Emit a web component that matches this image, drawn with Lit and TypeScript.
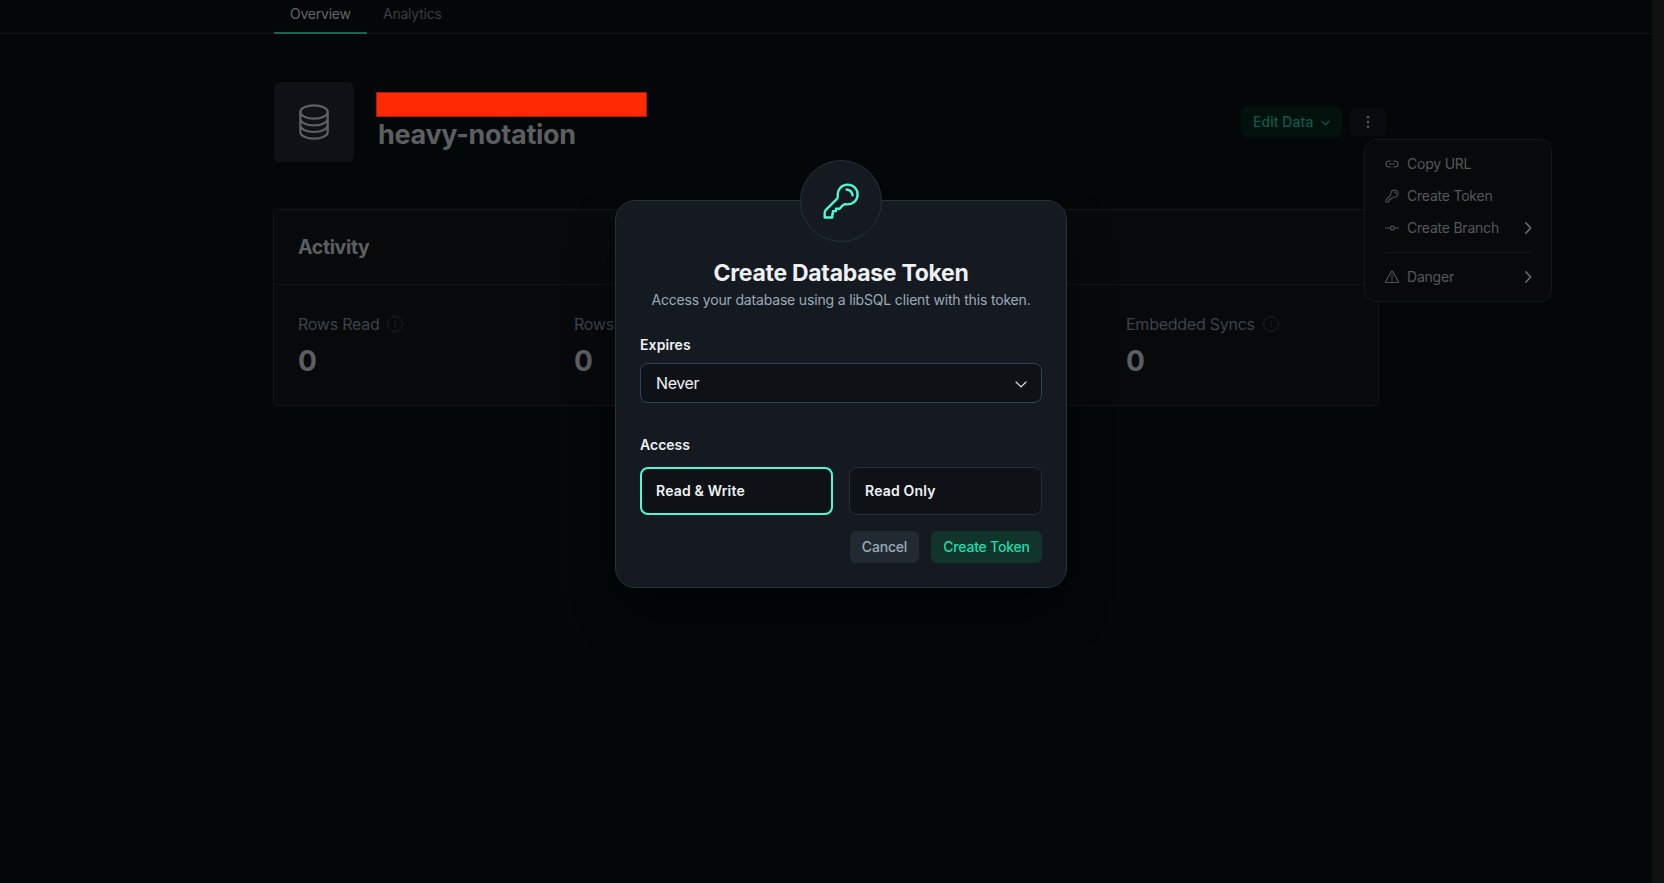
import { LitElement, html, css, svg } from "lit";
import { customElement } from "lit/decorators.js";

const chevronDown = (cls: string) => svg`<svg class=${cls} viewBox="0 0 12 7"><path d="M1 1l5 4.8L11 1"/></svg>`;
const chevronRight = svg`<svg class="chev-right" viewBox="0 0 7 12"><path d="M1 1l4.6 5L1 11"/></svg>`;
const keyIcon = (cls: string) => svg`<svg class=${cls} viewBox="0 0 38 38">
  <path d="M15.8 14.3C15.1 7.6 19.6 2.6 25.6 2.6C31.4 2.6 35.6 7 35.6 12.4C35.6 18.3 31 22.9 23.7 22.3C22 22.2 21.100 22.900 20.300 23.800L17.700 26.700H14V29.100H10.900V32.100H10.300V35.500H2.700V30.600C2.700 29.400 3.100 28.700 3.900 27.900L14.700 17.200C15.600 16.300 15.900 15.500 15.800 14.300Z"/>
  <path d="M24.600 7.500C27.900 7.800 30.200 10.100 30.600 13.400"/></svg>`;
const linkIcon = svg`<svg class="mi" viewBox="0 0 14 14"><path d="M5.4 4H4a3 3 0 0 0 0 6h1.4M8.6 4H10a3 3 0 0 1 0 6H8.6M4.5 7h5"/></svg>`;
const branchIcon = svg`<svg class="mi" viewBox="0 0 14 14"><path d="M0 7h5M9.6 7H14"/><circle cx="7.3" cy="7" r="2"/></svg>`;
const dangerIcon = svg`<svg class="mi" viewBox="0 0 14 14"><path d="M6.4 1.5L.7 11.3a.8.8 0 0 0 .7 1.2h11.2a.8.8 0 0 0 .7-1.2L7.6 1.5a.7.7 0 0 0-1.2 0zM7 4.8v3.6M7 9.8v1"/></svg>`;
const infoIcon = svg`<svg class="info" viewBox="0 0 16 16"><circle cx="8" cy="8" r="7.4"/><path d="M7 7.2h1.3v4M8 4.5v1"/></svg>`;

const metrics = ["Rows Read", "Rows Written", "Storage", "Embedded Syncs"];

@customElement("app-root")
export class AppRoot extends LitElement {
  static styles = css`
    :host { display: block; position: relative; height: 883px; overflow: hidden; background: #030708;
      font-family: Inter, "Liberation Sans", sans-serif; color: #5c5f62; font-size: 14px; }
    * { box-sizing: border-box; }
    svg { fill: none; stroke: currentColor; stroke-linecap: round; stroke-linejoin: round; display: block; flex: none; }
    .shell { display: flex; height: 100%; }
    .page { flex: 1; }
    .scrollbar { width: 12px; background: #111111; }
    .tabs { height: 34px; border-bottom: 1px solid #121617; padding-left: 274px; display: flex; align-items: stretch; }
    .tab { height: 34px; padding: 4px 16px 0; line-height: 20px; color: #393e44; letter-spacing: -.23px; }
    .tab.active { color: #626668; border-bottom: 2px solid #1a644f; width: 93px; }
    .hero { margin: 48px 266px 0 274px; height: 80px; display: flex; align-items: center; }
    .dbbox { width: 80px; height: 80px; border-radius: 6px; background: #0e1217; display: grid; place-items: center; color: #5c6062; }
    .db { width: 32px; height: 38px; stroke-width: 2.2; }
    .names { margin-left: 22px; align-self: flex-start; padding-top: 10px; }
    .redact { width: 271px; height: 25px; background: #ff2a03; border: 1px solid #a31c05; }
    .names h1 { margin: 1px 0 0 2px; font-size: 27px; line-height: 34px; font-weight: 700; letter-spacing: -.3px; }
    .spacer { flex: 1; }
    .edit { height: 32px; width: 101px; border-radius: 6px; background: #03110d; color: #0d5a48; display: flex; align-items: center; justify-content: space-between; padding: 0 12px 2px; font-weight: 500; letter-spacing: .05px; }
    .edit-chev { width: 9px; height: 6px; margin-top: 4px; stroke-width: 1.6; }
    .more { width: 36px; height: 28px; border-radius: 6px; background: #080c0f; margin-left: 8px; display: grid; place-items: center; }
    .dots { width: 4px; height: 14px; fill: currentColor; stroke: none; }
    .card { margin: 47px 0 0 273px; width: 1106px; height: 197px; border: 1px solid #11171a; border-radius: 6px; background: #08090b; }
    .card h2 { margin: 0; height: 75px; border-bottom: 1px solid #101416; padding: 0 24px; line-height: 75px; font-size: 19.5px; font-weight: 700; letter-spacing: -.35px; }
    .metrics { display: grid; grid-template-columns: repeat(4, 276px); padding: 27px 0 0 24px; }
    .label { display: flex; align-items: center; gap: 8px; font-size: 16px; line-height: 24px; color: #3c434a; letter-spacing: -.25px; }
    .info { width: 16px; height: 16px; stroke-width: 1; color: #17212a; }
    .value { font-size: 28px; line-height: 36px; font-weight: 700; margin-top: 7px; }
    .menu { position: absolute; left: 1364px; top: 139px; width: 188px; height: 163px; border: 1px solid #11171a; border-radius: 12px; background: #08090b; padding: 8px 19px 0 20px; }
    .item { height: 32px; padding-bottom: 1px; display: flex; align-items: center; gap: 8px; color: #55585b; letter-spacing: -.22px; }
    .mi { width: 14px; height: 14px; stroke-width: 1.1; color: #525558; }
    .mk { width: 14px; height: 14px; stroke-width: 2.8; color: #525558; }
    .chev-right { width: 7px; height: 12px; margin-left: auto; stroke-width: 1.8; color: #66696b; }
    .rule { height: 1px; background: #12151c; margin: 8px 0; }
    .modal { position: absolute; left: 615px; top: 200px; width: 452px; height: 388px; border: 1px solid #23323b; border-radius: 20px; background: #151a21;
      box-shadow: 0 25px 50px -12px rgba(0,0,0,.7); padding: 0 24px; color: #eef1f4; }
    .badge { position: absolute; left: 184px; top: -41px; width: 82px; height: 82px; border: 1px solid #23323b; border-radius: 50%; background: #151a21; display: grid; place-items: center; color: #4ff8d2; }
    .key { width: 38px; height: 38px; stroke-width: 2.4; }
    .title { margin: 56px 0 0; text-align: center; font-size: 23px; line-height: 33px; font-weight: 700; letter-spacing: -.28px; }
    .sub { margin: 0 -10px; text-align: center; line-height: 20px; color: #9aabb9; letter-spacing: -.17px; }
    .field { display: block; font-weight: 600; line-height: 20px; letter-spacing: .1px; }
    .expires { margin-top: 25px; }
    .select { margin-top: 8px; height: 40px; border: 1px solid #2f4655; border-radius: 8px; background: #0e1116; display: flex; align-items: center; justify-content: space-between; padding: 0 14px 0 15px; font-size: 16px; letter-spacing: -.4px; }
    .sel-chev { width: 12px; height: 7px; margin-top: 2px; stroke-width: 1.1; }
    .access { margin-top: 32px; letter-spacing: 0; }
    .radios { display: grid; grid-template-columns: 1fr 1fr; gap: 16px; margin-top: 12px; }
    .radio { height: 48px; border: 1px solid #262e37; border-radius: 8px; background: #0e1116; padding: 0 15px 2px; display: flex; align-items: center; font-weight: 600; letter-spacing: .18px; }
    .radio.on { border: 2px solid #4ff8d2; padding: 0 14px 2px; }
    .actions { display: flex; justify-content: flex-end; gap: 12px; margin-top: 16px; }
    .btn { height: 32px; padding: 0 0 2px; border-radius: 6px; font-weight: 500; display: grid; place-items: center; letter-spacing: -.2px; }
    .cancel { width: 69px; background: #222a31; color: #9aabb9; }
    .create { width: 111px; background: #11342b; color: #1edcae; }
  `;

  render() {
    return html`
      <div class="shell">
        <div class="page">
          <nav class="tabs"><span class="tab active">Overview</span><span class="tab">Analytics</span></nav>
          <div class="hero">
            <div class="dbbox"><svg class="db" viewBox="0 0 32 38">
              <ellipse cx="16" cy="9" rx="13.7" ry="6.7"/>
              <path d="M2.3 9v20c0 3.700 6.100 6.700 13.700 6.700s13.700-3 13.700-6.700V9M2.300 15.700c0 3.700 6.100 6.700 13.700 6.700s13.700-3 13.700-6.700M2.300 22.300c0 3.700 6.100 6.700 13.700 6.700s13.700-3 13.700-6.700"/>
            </svg></div>
            <div class="names"><div class="redact"></div><h1>heavy-notation</h1></div>
            <div class="spacer"></div>
            <div class="edit"><span>Edit Data</span>${chevronDown("edit-chev")}</div>
            <div class="more"><svg class="dots" viewBox="0 0 4 14"><circle cx="2" cy="2" r="1.2"/><circle cx="2" cy="7" r="1.2"/><circle cx="2" cy="12" r="1.2"/></svg></div>
          </div>
          <section class="card">
            <h2>Activity</h2>
            <div class="metrics">${metrics.map((m) => html`<div><div class="label"><span>${m}</span>${infoIcon}</div><div class="value">0</div></div>`)}</div>
          </section>
        </div>
        <div class="scrollbar"></div>
      </div>
      <div class="menu">
        <div class="item">${linkIcon}<span>Copy URL</span></div>
        <div class="item">${keyIcon("mk")}<span>Create Token</span></div>
        <div class="item">${branchIcon}<span>Create Branch</span>${chevronRight}</div>
        <div class="rule"></div>
        <div class="item">${dangerIcon}<span>Danger</span>${chevronRight}</div>
      </div>
      <div class="modal">
        <div class="badge">${keyIcon("key")}</div>
        <h3 class="title">Create Database Token</h3>
        <p class="sub">Access your database using a libSQL client with this token.</p>
        <span class="field expires">Expires</span>
        <div class="select"><span>Never</span>${chevronDown("sel-chev")}</div>
        <span class="field access">Access</span>
        <div class="radios"><div class="radio on">Read &amp; Write</div><div class="radio">Read Only</div></div>
        <div class="actions"><div class="btn cancel">Cancel</div><div class="btn create">Create Token</div></div>
      </div>`;
  }
}
